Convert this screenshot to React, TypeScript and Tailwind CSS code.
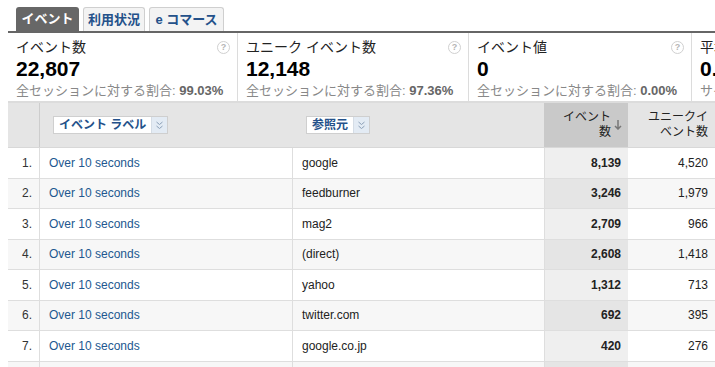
const rows = [
  { label: 'Over 10 seconds', source: 'google', events: '8,139', unique: '4,520' },
  { label: 'Over 10 seconds', source: 'feedburner', events: '3,246', unique: '1,979' },
  { label: 'Over 10 seconds', source: 'mag2', events: '2,709', unique: '966' },
  { label: 'Over 10 seconds', source: '(direct)', events: '2,608', unique: '1,418' },
  { label: 'Over 10 seconds', source: 'yahoo', events: '1,312', unique: '713' },
  { label: 'Over 10 seconds', source: 'twitter.com', events: '692', unique: '395' },
  { label: 'Over 10 seconds', source: 'google.co.jp', events: '420', unique: '276' },
  { label: '', source: '', events: '', unique: '' },
]

const metrics = [
  { title: 'イベント数', value: '22,807', sub: '全セッションに対する割合:', pct: '99.03%', w: 'w-[230px]' },
  { title: 'ユニーク イベント数', value: '12,148', sub: '全セッションに対する割合:', pct: '97.36%', w: 'w-[231px]' },
  { title: 'イベント値', value: '0', sub: '全セッションに対する割合:', pct: '0.00%', w: 'w-[223px]' },
  { title: '平均値', value: '0.00', sub: 'サイトの平均:', pct: '0.00', w: 'w-[200px]' },
]

const HelpIcon = () => (
  <span className="flex h-[13px] w-[13px] shrink-0 items-center justify-center rounded-full border border-[#d0d0d0] text-[9px] font-bold leading-none text-[#b5b5b5]">
    ?
  </span>
)

const Chevrons = () => (
  <span className="flex h-full w-[16px] items-center justify-center border-l border-[#d5dde6] bg-[#e3ebf4]">
    <svg width="7" height="9" viewBox="0 0 7 9" fill="none" stroke="#8aa0b8" strokeWidth="1">
      <path d="M0.5 1 L3.5 3.5 L6.5 1" />
      <path d="M0.5 5 L3.5 7.5 L6.5 5" />
    </svg>
  </span>
)

const DimButton = ({ text }: { text: string }) => (
  <div className="flex h-[18px] items-center border border-[#cfcfcf] bg-white">
    <span className="px-[5px] text-[12px] font-bold text-[#24518a]">{text}</span>
    <Chevrons />
  </div>
)

export default function App() {
  return (
    <div className="h-[367px] w-[715px] overflow-hidden bg-white pl-2 font-['Liberation_Sans','Noto_Sans_CJK_JP',sans-serif] text-[#333]">
      {/* tabs */}
      <div className="flex h-[31px] items-end gap-1 pl-2">
        <div className="flex h-[24px] w-[63px] items-center justify-center rounded-t-[3px] bg-[#676767] text-[13px] font-bold text-white">
          イベント
        </div>
        <div className="flex h-[24px] w-[62px] items-center justify-center rounded-t-[3px] border border-b-0 border-[#cfcfcf] bg-[#f3f3f3] text-[13px] font-bold text-[#24518a]">
          利用状況
        </div>
        <div className="flex h-[24px] w-[75px] items-center justify-center rounded-t-[3px] border border-b-0 border-[#cfcfcf] bg-[#f3f3f3] text-[13px] font-bold text-[#24518a]">
          e コマース
        </div>
      </div>
      <div className="h-[2px] bg-[#666]" />

      {/* metrics */}
      <div className="flex h-[70px] border-b-2 border-[#dcdcdc]">
        {metrics.map((m, i) => (
          <div key={i} className={`${m.w} shrink-0 border-r border-[#dcdcdc] pl-2 pr-[7px] pt-[5px]`}>
            <div className="flex items-center justify-between">
              <span className="whitespace-nowrap text-[14px] leading-[18px] text-[#222]">{m.title}</span>
              {i < 3 && <HelpIcon />}
            </div>
            <div className="mt-[2px] text-[21px] font-bold leading-[22px] text-black">{m.value}</div>
            <div className="mt-[2px] whitespace-nowrap text-[13px] leading-[17px] text-[#888]">
              {m.sub} <span className="font-bold text-[#666]">{m.pct}</span>
            </div>
          </div>
        ))}
      </div>

      {/* table header */}
      <div className="flex h-[45px] border-b border-[#d8d8d8] bg-[#e5e5e5] text-[12px]">
        <div className="w-[32px] shrink-0 border-r border-[#cdcdcd]" />
        <div className="flex w-[253px] shrink-0 items-center pl-[13px]">
          <DimButton text="イベント ラベル" />
        </div>
        <div className="flex w-[251px] shrink-0 items-center pl-[13px]">
          <DimButton text="参照元" />
        </div>
        <div className="flex w-[84px] shrink-0 items-center justify-end gap-[3px] bg-[#c9c9c9] pr-[6px]">
          <span className="text-right leading-[15px] text-[#222]">
            イベント
            <br />
            数
          </span>
          <svg width="8" height="10" viewBox="0 0 8 10" fill="none" stroke="#777" strokeWidth="1.5">
            <path d="M4 0 V9 M1 6 L4 9 L7 6" />
          </svg>
        </div>
        <div className="flex w-[87px] shrink-0 items-center justify-end pr-[7px]">
          <span className="text-right leading-[15px] text-[#222]">
            ユニークイ
            <br />
            ベント数
          </span>
        </div>
      </div>

      {/* rows */}
      {rows.map((r, i) => {
        const odd = i % 2 === 0
        return (
          <div
            key={i}
            className={`flex h-[30.5px] border-b border-[#dedede] text-[12px] ${odd ? 'bg-white' : 'bg-[#f7f7f7]'}`}
          >
            <div className="flex w-[32px] shrink-0 items-center justify-end border-r border-[#dedede] pr-[7px]">
              {r.label ? `${i + 1}.` : ''}
            </div>
            <div className="flex w-[253px] shrink-0 items-center border-r border-[#dedede] pl-[9px] text-[#22578f]">
              {r.label}
            </div>
            <div className="flex w-[251px] shrink-0 items-center pl-[9px] text-[#222]">{r.source}</div>
            <div
              className={`flex w-[84px] shrink-0 items-center justify-end border-l border-[#dedede] pr-[7px] font-bold text-[#222] ${odd ? 'bg-[#efefef]' : 'bg-[#e5e5e5]'}`}
            >
              {r.events}
            </div>
            <div className="flex w-[87px] shrink-0 items-center justify-end pr-[7px] text-[#222]">{r.unique}</div>
          </div>
        )
      })}
    </div>
  )
}
